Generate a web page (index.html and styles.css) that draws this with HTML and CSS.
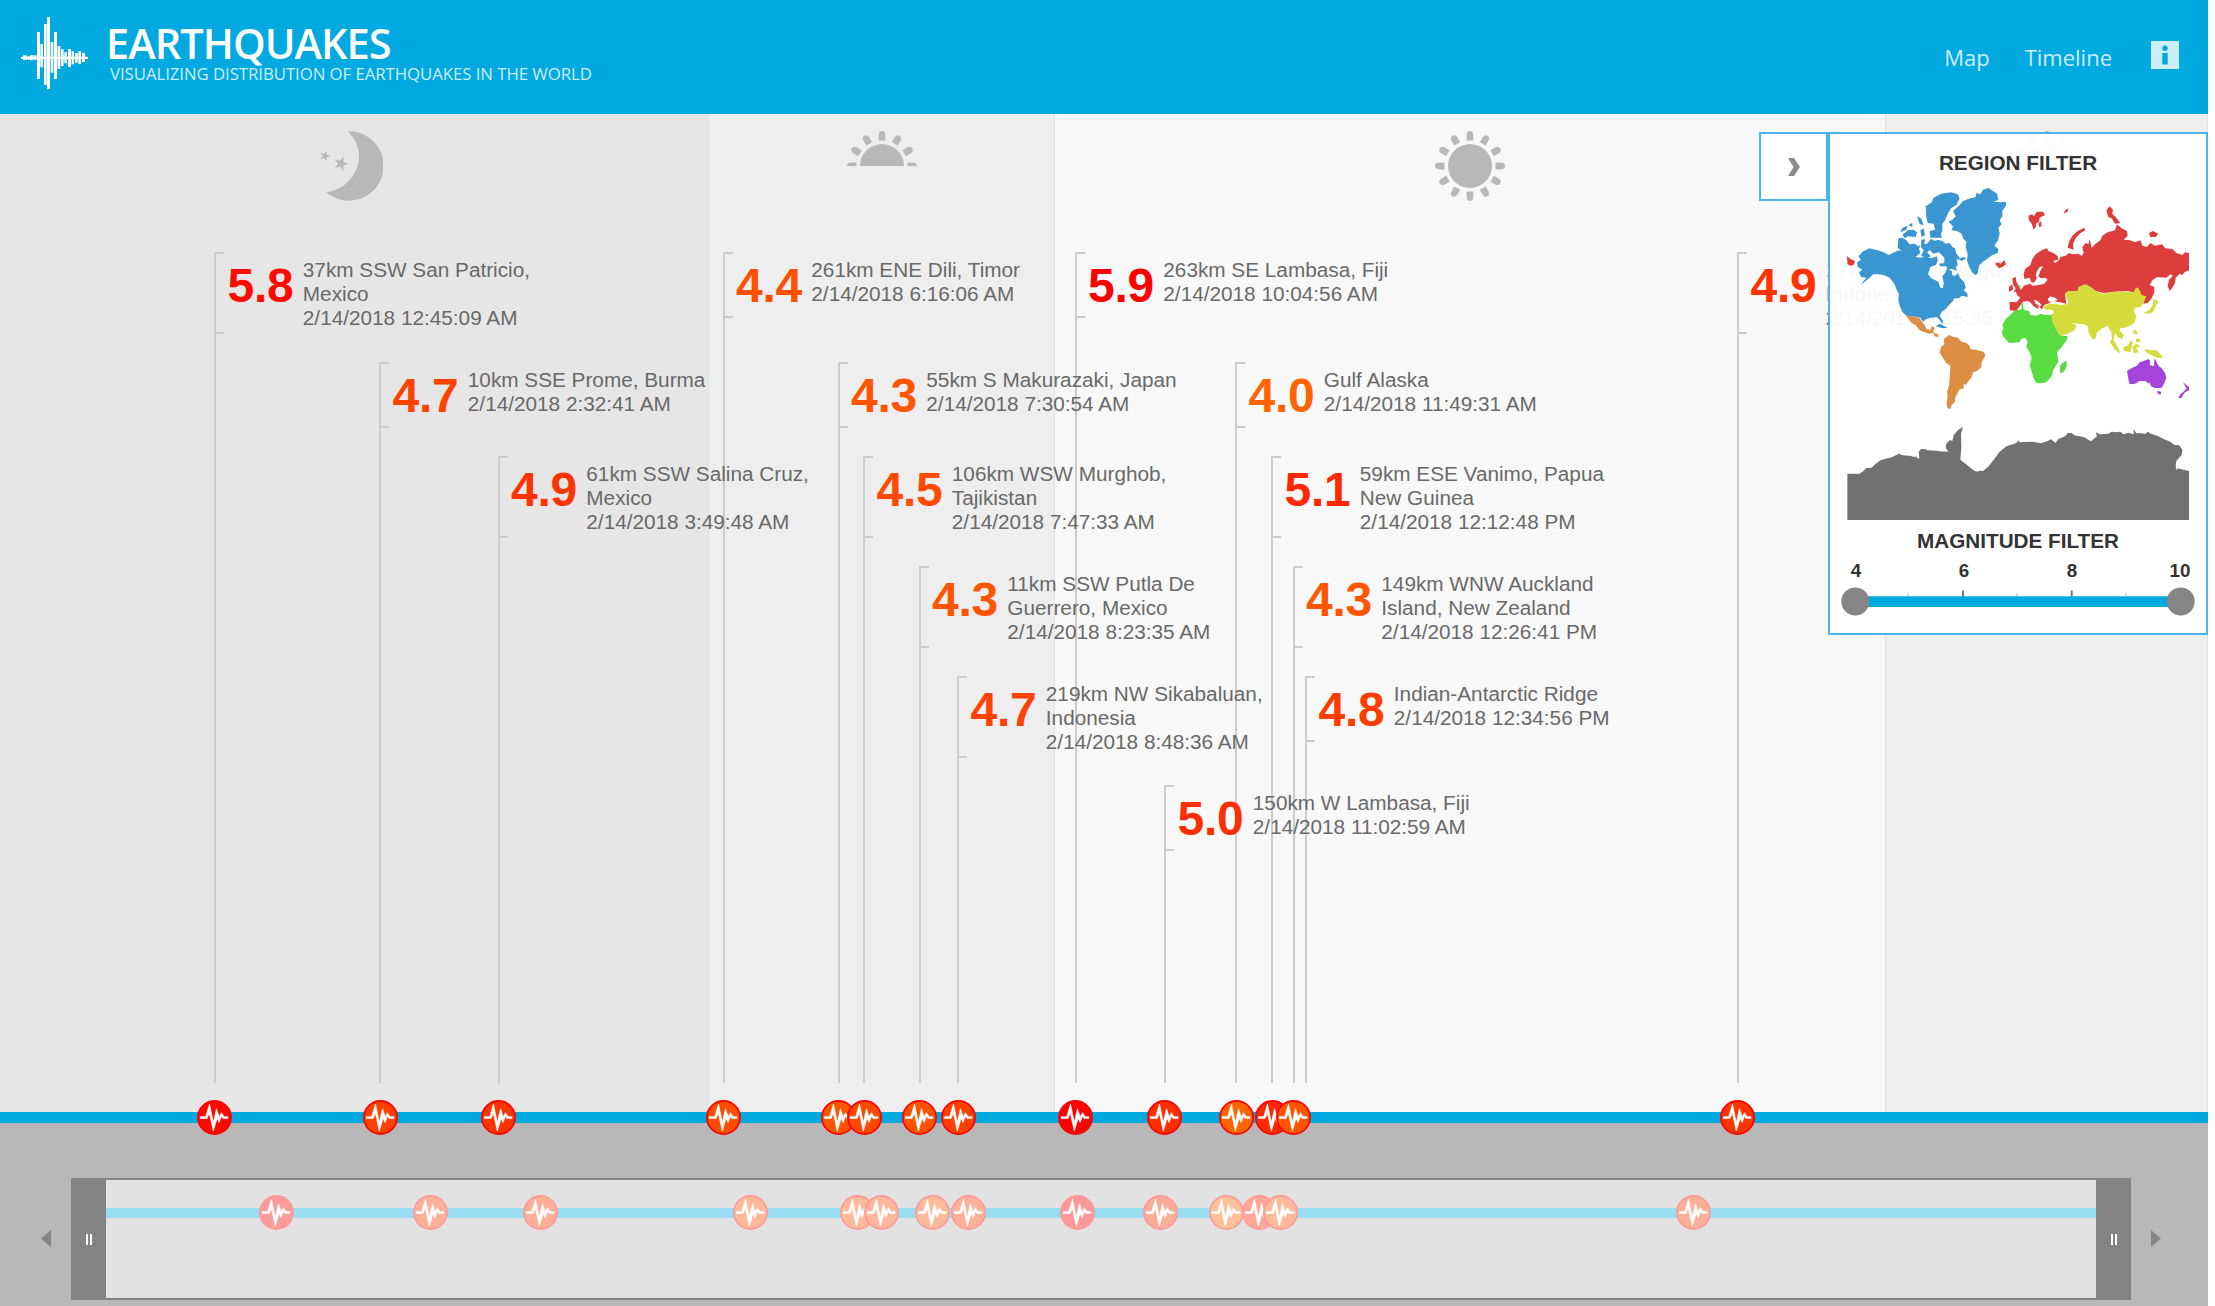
FILE: index.html
```html
<!DOCTYPE html>
<html lang="en">
<head>
<meta charset="utf-8">
<title>Earthquakes</title>
<link rel="stylesheet" href="styles.css">
</head>
<body>
<svg class="defs" width="0" height="0">
  <symbol id="quake" viewBox="-17.5 -17.5 35 35">
    <circle r="16.6" fill="currentColor" stroke="#ff0000" stroke-width="1.7"/>
    <path class="pulse" d="M-14.2,-.8H-8.8L-5,-13.4L-1.2,5L2,-8.8L4.6,-.8L7,-4.8L9.6,-.8H13.4V1H8.6L7,-1.2L4.6,5L2.6,.8L-1.2,13.6L-5.2,-4.6L-7.4,1H-14.2Z"/>
  </symbol>
  <symbol id="quake-soft" viewBox="-17.5 -17.5 35 35">
    <circle r="16.6" fill="currentColor" stroke="#ff9999" stroke-width="1.7"/>
    <path class="pulse" d="M-14.2,-.8H-8.8L-5,-13.4L-1.2,5L2,-8.8L4.6,-.8L7,-4.8L9.6,-.8H13.4V1H8.6L7,-1.2L4.6,5L2.6,.8L-1.2,13.6L-5.2,-4.6L-7.4,1H-14.2Z"/>
  </symbol>
  <symbol id="sun" viewBox="-35 -35 70 70">
    <circle r="22"/>
    <path id="r" d="M-3.4,-25.5V-31Q-3.2,-35 0,-35Q3.2,-35 3.4,-31V-25.5Z"/>
    <use href="#r" transform="rotate(30)"/><use href="#r" transform="rotate(60)"/><use href="#r" transform="rotate(90)"/>
    <use href="#r" transform="rotate(120)"/><use href="#r" transform="rotate(150)"/><use href="#r" transform="rotate(180)"/>
    <use href="#r" transform="rotate(210)"/><use href="#r" transform="rotate(240)"/><use href="#r" transform="rotate(270)"/>
    <use href="#r" transform="rotate(300)"/><use href="#r" transform="rotate(330)"/>
  </symbol>
</svg>
<div class="app">
  <header class="header">
    <svg class="logo" viewBox="33 21 201 217" fill="#fff">
      <path d="M33,140H234V147H33ZM39,136H50V150H39ZM53,138H58V150H53ZM60,135H70V151H60ZM72,136H79V150H72ZM81,66H90V206H81ZM91,102H99V172H91ZM102,42H110V225H102ZM111,21H120V238H111ZM122,96H130V188H122ZM132,66H141V207H132ZM142.500,108H151V177H142.500ZM153,118H161V168H153ZM163,127H171V160H163ZM174,117H183V171H174ZM185,124H192V163H185ZM195,129H203V158H195ZM205,123H213V162H205ZM216,129H225V156H216Z"/>
    </svg>
    <div class="titles">
      <h1>EARTHQUAKES</h1>
      <p>VISUALIZING DISTRIBUTION OF EARTHQUAKES IN THE WORLD</p>
    </div>
    <nav class="nav">
      <a class="nav-map">Map</a>
      <a class="nav-time">Timeline</a>
      <svg class="info" viewBox="0 0 28 28"><path fill="#cceefa" d="M0,0H28V28H0Z"/><circle cx="14" cy="7.300" r="2.700" fill="#00a9e0"/><path fill="#00a9e0" d="M11.300,12H16.700V23.500H11.300Z"/></svg>
    </nav>
  </header>

  <main class="timeline">
    <div class="bands">
      <div class="band night">
        <svg class="moon" viewBox="57 34 194 210"><path d="M143,35A104,104 0 1 1 78,217C130,214 177,165 177,112C177,82 165,55 143,35Z"/><path d="M92,109L80.300,112.900L80.200,125.200L72.900,115.200L61.200,118.900L68.400,109L61.200,99.100L72.900,102.800L80.200,92.800L80.300,105.100Z"/><path d="M146,132L130.300,137.100L130.100,153.900L120.200,140.400L104.400,145.500L114,132L104.400,118.500L120.200,123.600L130.100,110.100L130.300,126.900Z"/></svg>
      </div>
      <div class="band dawn"><svg class="half" viewBox="-35 -35 70 35"><use href="#sun" x="-35" y="-35" width="70" height="70"/></svg></div>
      <div class="band day"><svg class="full"><use href="#sun"/></svg></div>
      <div class="band dusk"><svg class="half" viewBox="-35 -35 70 35"><use href="#sun" x="-35" y="-35" width="70" height="70"/></svg></div>
    </div>

    <div class="axis"></div>

    <div class="event r1" style="left:214px"><div class="label tall"><b style="color:#ff0a00">5.8</b><p>37km SSW San Patricio,<br>Mexico<br>2/14/2018 12:45:09 AM</p></div></div>
    <div class="event r2" style="left:379px"><div class="label"><b style="color:#ff4200">4.7</b><p>10km SSE Prome, Burma<br>2/14/2018 2:32:41 AM</p></div></div>
    <div class="event r3" style="left:497.500px"><div class="label tall"><b style="color:#ff3300">4.9</b><p>61km SSW Salina Cruz,<br>Mexico<br>2/14/2018 3:49:48 AM</p></div></div>
    <div class="event r1" style="left:722.500px"><div class="label"><b style="color:#ff5000">4.4</b><p>261km ENE Dili, Timor<br>2/14/2018 6:16:06 AM</p></div></div>
    <div class="event r2" style="left:837.500px"><div class="label"><b style="color:#ff5500">4.3</b><p>55km S Makurazaki, Japan<br>2/14/2018 7:30:54 AM</p></div></div>
    <div class="event r3" style="left:863px"><div class="label tall"><b style="color:#ff4a00">4.5</b><p>106km WSW Murghob,<br>Tajikistan<br>2/14/2018 7:47:33 AM</p></div></div>
    <div class="event r4" style="left:918.500px"><div class="label tall"><b style="color:#ff5500">4.3</b><p>11km SSW Putla De<br>Guerrero, Mexico<br>2/14/2018 8:23:35 AM</p></div></div>
    <div class="event r5" style="left:957px"><div class="label tall"><b style="color:#ff4200">4.7</b><p>219km NW Sikabaluan,<br>Indonesia<br>2/14/2018 8:48:36 AM</p></div></div>
    <div class="event r1" style="left:1074.500px"><div class="label"><b style="color:#ff0000">5.9</b><p>263km SE Lambasa, Fiji<br>2/14/2018 10:04:56 AM</p></div></div>
    <div class="event r6" style="left:1164px"><div class="label"><b style="color:#ff2e00">5.0</b><p>150km W Lambasa, Fiji<br>2/14/2018 11:02:59 AM</p></div></div>
    <div class="event r2" style="left:1235px"><div class="label"><b style="color:#ff6400">4.0</b><p>Gulf Alaska<br>2/14/2018 11:49:31 AM</p></div></div>
    <div class="event r3" style="left:1271px"><div class="label tall"><b style="color:#ff2800">5.1</b><p>59km ESE Vanimo, Papua<br>New Guinea<br>2/14/2018 12:12:48 PM</p></div></div>
    <div class="event r4" style="left:1292.500px"><div class="label tall"><b style="color:#ff5500">4.3</b><p>149km WNW Auckland<br>Island, New Zealand<br>2/14/2018 12:26:41 PM</p></div></div>
    <div class="event r5" style="left:1305px"><div class="label"><b style="color:#ff3c00">4.8</b><p>Indian-Antarctic Ridge<br>2/14/2018 12:34:56 PM</p></div></div>
    <div class="event r1" style="left:1737px"><div class="label tall"><b style="color:#ff3300">4.9</b><p>17km NNW Pasigung,<br>Indonesia<br>2/14/2018 5:15:35 PM</p></div></div>

    <svg class="marker" style="left:214.500px;color:#ff0800"><use href="#quake"/></svg>
    <svg class="marker" style="left:380px;color:#ff4000"><use href="#quake"/></svg>
    <svg class="marker" style="left:498.500px;color:#ff3300"><use href="#quake"/></svg>
    <svg class="marker" style="left:723.500px;color:#ff4d00"><use href="#quake"/></svg>
    <svg class="marker" style="left:838.500px;color:#ff5500"><use href="#quake"/></svg>
    <svg class="marker" style="left:864.300px;color:#ff4800"><use href="#quake"/></svg>
    <svg class="marker" style="left:919.500px;color:#ff5200"><use href="#quake"/></svg>
    <svg class="marker" style="left:958px;color:#ff4000"><use href="#quake"/></svg>
    <svg class="marker" style="left:1075.500px;color:#ff0000"><use href="#quake"/></svg>
    <svg class="marker" style="left:1164.700px;color:#ff2e00"><use href="#quake"/></svg>
    <svg class="marker" style="left:1236.200px;color:#ff6400"><use href="#quake"/></svg>
    <svg class="marker" style="left:1272px;color:#ff2800"><use href="#quake"/></svg>
    <svg class="marker" style="left:1293.500px;color:#ff5500"><use href="#quake"/></svg>
    <svg class="marker" style="left:1737.700px;color:#ff3300"><use href="#quake"/></svg>
  </main>

  <section class="scroller">
    <svg class="arrow" viewBox="0 0 10 17"><path d="M10,0V17L0,8.500Z"/></svg>
    <div class="range">
      <div class="handle"><i></i><i></i></div>
      <div class="overview">
        <div class="mini-axis"></div>
        <svg class="mini" style="left:170.700px;color:#ff9c99"><use href="#quake-soft"/></svg>
        <svg class="mini" style="left:324.500px;color:#ffb099"><use href="#quake-soft"/></svg>
        <svg class="mini" style="left:434.800px;color:#ffae99"><use href="#quake-soft"/></svg>
        <svg class="mini" style="left:644.100px;color:#ffb899"><use href="#quake-soft"/></svg>
        <svg class="mini" style="left:751px;color:#ffbb99"><use href="#quake-soft"/></svg>
        <svg class="mini" style="left:775px;color:#ffb699"><use href="#quake-soft"/></svg>
        <svg class="mini" style="left:826.300px;color:#ffba99"><use href="#quake-soft"/></svg>
        <svg class="mini" style="left:862.100px;color:#ffb099"><use href="#quake-soft"/></svg>
        <svg class="mini" style="left:971.100px;color:#ff9999"><use href="#quake-soft"/></svg>
        <svg class="mini" style="left:1054px;color:#ffab99"><use href="#quake-soft"/></svg>
        <svg class="mini" style="left:1120.600px;color:#ffc199"><use href="#quake-soft"/></svg>
        <svg class="mini" style="left:1153.800px;color:#ffa899"><use href="#quake-soft"/></svg>
        <svg class="mini" style="left:1174.400px;color:#ffbb99"><use href="#quake-soft"/></svg>
        <svg class="mini" style="left:1587.200px;color:#ffae99"><use href="#quake-soft"/></svg>
      </div>
      <div class="handle"><i></i><i></i></div>
    </div>
    <svg class="arrow" viewBox="0 0 10 17"><path d="M0,0V17L10,8.500Z"/></svg>
  </section>

  <aside class="filter">
    <div class="toggle"><svg viewBox="0 0 12 18"><path d="M0,0H6L12,9L6,18H0L5.500,9Z"/></svg></div>
    <div class="panel">
      <h2>REGION FILTER</h2>
      <svg class="map" viewBox="80 50 1028 1000">
        <g class="na">
          <path d="M110,276L122,268L114,258L126,244L146,234L172,240L190,246L205,254L222,246L236,240L252,244L262,252L278,258L300,262L318,258L332,264L350,258L352,272L346,284L330,290L323,312L333,324L354,334L360,352L368,354L370,338L366,318L376,306L380,292L394,302L396,314L404,318L412,308L420,324L432,336L436,352L430,360L440,368L443,380L424,376L416,384L402,384L398,392L386,404L376,416L364,424L358,436L368,452L366,462L360,452L350,440L334,442L318,446L308,454L300,442L280,438L258,436L246,424L238,406L234,390L236,372L228,356L222,340L208,322L190,314L172,312L158,312L148,322L136,332L122,344L130,332L138,322L122,320L116,306L126,298L112,290Z"/>
          <path d="M234,204L246,202L258,210L268,222L284,220L292,228L300,224L296,236L300,248L290,256L280,262L262,258L244,242L232,232Z"/>
          <path d="M303,208L314,206L312,220L318,222L332,206L344,212L352,208L366,212L376,220L388,218L396,230L404,234L408,250L418,262L414,270L408,264L412,284L406,290L410,302L396,296L384,296L376,288L360,288L356,280L372,278L372,262L356,246L340,250L328,240L320,246L332,258L316,262L302,256L310,240L302,230Z"/>
          <path d="M316,108L334,96L340,82L362,70L392,66L412,72L418,84L408,104L392,114L382,130L374,150L366,160L366,180L362,190L364,202L330,202L328,182L344,178L340,160L322,158L318,140Z"/>
          <path d="M290,138L302,144L310,164L298,162ZM240,186L246,172L262,166L258,178ZM246,194L262,180L280,178L290,186L286,200L262,198L254,204ZM264,164L276,158L276,170ZM300,180L310,174L314,194L304,200Z"/>
          <path d="M384,154L396,148L406,138L398,122L416,106L428,92L450,84L466,80L468,68L480,72L488,58L504,53L518,62L530,70L534,88L520,94L540,96L556,94L558,104L546,122L546,138L538,150L544,162L534,172L538,190L532,212L522,226L534,236L532,248L516,254L500,266L486,276L476,286L472,310L464,314L454,304L446,288L440,270L442,250L436,232L438,214L428,204L424,190L410,182L394,180L398,168Z"/>
          <path d="M414,266L428,260L438,264L424,272ZM346,468L358,460L382,472L366,474Z"/>
        </g>
        <g class="sa">
          <path d="M258,436L280,438L298,444L306,456L314,466L318,476L330,478L334,468L344,472L338,484L346,490L354,492L354,500L342,498L340,488L326,490L308,484L296,478L288,466L274,458L264,446Z"/>
          <path d="M370,506L386,494L398,500L412,502L424,514L438,518L448,526L450,536L472,540L490,544L495,556L484,576L482,592L470,602L458,606L454,620L442,636L438,644L430,640L430,654L416,658L410,672L404,682L404,694L394,704L390,716L382,714L378,700L382,680L380,664L386,646L388,620L390,588L376,576L366,560L358,546L362,530L372,522Z"/>
        </g>
        <g class="eu">
          <path d="M80,257L90,266L104,272L100,284L88,286L81,280ZM524,280L534,276L540,280L552,270L557,282L546,290L536,294ZM624,136L636,132L640,138L650,124L668,124L674,134L658,142L656,156L648,158L646,170L640,178L634,160L626,150ZM654,160L662,152L664,168L656,170ZM729,130L736,118L744,114L742,124ZM742,232L746,214L756,196L772,182L792,172L794,180L778,190L766,204L758,220L760,238ZM858,120L868,108L878,118L876,130L886,140L900,158L884,160L874,144L864,140ZM986,188L998,182L1014,190L1006,200L990,200Z"/>
          <path d="M566,350L576,342L578,358L566,364ZM576,324L586,320L588,334L598,352L600,360L580,366L586,354L578,342Z"/>
          <path d="M568,394L588,396L600,382L590,374L586,362L604,356L610,346L630,340L636,346L656,344L672,340L682,328L674,322L662,324L654,318L660,302L668,288L658,290L650,302L646,316L650,324L640,338L632,334L628,322L612,326L610,312L614,296L630,284L636,266L648,250L666,238L680,234L684,242L700,248L712,258L714,268L698,272L704,278L716,270L720,260L736,256L746,248L758,252L774,250L784,256L790,248L786,230L796,218L804,222L808,206L814,232L824,222L840,210L846,196L862,186L884,180L890,162L904,174L920,182L922,196L910,208L930,210L944,216L960,210L966,226L980,230L990,218L1004,226L1026,222L1034,234L1056,236L1068,248L1086,254L1094,246L1108,248L1108,300L1094,304L1086,314L1078,310L1066,322L1064,338L1056,352L1048,362L1042,346L1046,328L1058,316L1050,312L1038,322L1010,320L996,330L988,344L1002,350L1002,366L994,384L982,398L968,400L972,382L962,374L952,352L940,366L920,362L882,364L850,368L826,362L810,350L790,344L776,350L772,362L744,362L734,370L738,400L718,396L700,392L682,400L672,404L664,418L656,406L652,416L640,408L630,396L622,392L608,394L598,408L588,422L568,420Z"/>
        </g>
        <path class="gap" d="M640,388L652,392L664,404L658,408L646,400ZM682,386L690,378L704,382L712,388L698,394L686,394Z"/>
        <g class="asia">
          <path d="M734,372L744,362L772,362L774,350L796,342L812,350L826,362L848,370L882,364L918,364L940,366L946,352L954,352L964,374L978,378L970,398L960,410L944,412L940,424L948,438L942,458L926,468L910,474L900,472L898,482L910,494L906,506L894,502L884,488L880,510L894,534L900,550L884,538L868,514L874,508L874,488L862,466L846,474L830,486L826,504L818,508L806,490L802,468L790,462L772,460L752,458L768,464L764,478L748,488L722,498L708,480L698,458L694,432L702,426L694,418L674,418L670,410L684,402L700,400L722,404L738,402L744,396Z"/>
          <path d="M970,428L986,420L996,406L1000,386L1014,392L1006,408L1000,422L988,430ZM938,478L948,480L952,492L940,492ZM946,506L958,504L960,514L948,516ZM908,530L922,526L930,512L938,514L934,530L930,546L912,542ZM936,530L948,520L960,528L946,534L956,546L940,548ZM972,536L990,540L1008,540L1024,556L1030,562L1010,562L996,556L976,544Z"/>
        </g>
        <g class="africa">
          <path d="M603,398L608,398L610,418L626,422L630,434L648,436L660,430L676,434L694,434L698,458L710,482L722,498L742,496L740,508L724,530L710,546L714,574L704,590L698,600L696,614L684,630L672,638L648,638L640,624L634,604L628,584L634,562L628,546L618,530L622,514L614,502L602,506L598,516L566,518L548,498L544,484L550,474L546,464L556,446L572,432L582,422L604,416Z"/>
          <path d="M720,584L732,574L740,572L738,590L730,606L720,608L718,596ZM595,346L600,344L600,358Z"/>
        </g>
        <path class="oceania" d="M920,602L936,592L950,586L958,576L970,572L984,566L990,572L988,584L1000,588L1003,564L1010,578L1016,588L1024,594L1034,608L1038,622L1032,638L1024,652L1006,654L992,648L988,636L984,640L976,632L958,632L944,640L928,642L924,626ZM1010,662L1022,664L1022,672L1014,672ZM1088,636L1106,650L1106,660L1094,666L1082,684L1074,682L1080,672L1092,662L1098,654Z"/>
        <path class="antarctic" d="M81,910H118L128,903L138,893L154,892L166,880L180,870L196,865L214,861L236,850L246,855L268,856L282,860L288,858L292,865L297,863L295,844L302,836L316,837L320,840L348,841L356,843L384,844L376,832L378,820L388,809L396,812L400,795L412,780L428,769L422,790L423,830L420,868L440,884L460,900L470,904L478,901L488,902L505,888L520,868L538,844L558,828L588,818L594,810L598,816L636,814L662,819L680,813L692,807L706,818L714,806L736,797L742,788L754,788L762,795L790,800L812,813L830,798L826,786L838,792L864,790L874,784L892,786L900,784L910,792L924,787L940,792L940,777L948,789L960,788L974,791L983,784L988,789L1012,797L1030,806L1050,814L1062,824L1076,824L1086,838L1084,854L1068,872L1066,888L1069,900L1072,894L1090,898L1108,903V1050H81Z"/>
      </svg>
      <h2>MAGNITUDE FILTER</h2>
      <div class="scale"><span>4</span><span>6</span><span>8</span><span>10</span></div>
      <svg class="slider" viewBox="0 0 356 30">
        <path d="M68,6V10M177,6V10M286,6V10" stroke="#9db4bf" stroke-width="1"/>
        <path d="M123,3.500V10M231.700,3.500V10" stroke="#5f8391" stroke-width="2"/>
        <path d="M15,9.300H340V20H15Z" fill="#00a9e0"/>
        <circle cx="15.300" cy="14.500" r="14" fill="#858585"/><circle cx="340.700" cy="14.500" r="14" fill="#858585"/>
      </svg>
    </div>
  </aside>
</div>
</body>
</html>
```
FILE: styles.css
```css
*, ::before { box-sizing: border-box; }
body { margin: 0; background: #fdfdfe; font-family: "Liberation Sans", Arial, sans-serif; overflow: hidden; }
h1, h2, p { margin: 0; }
svg { display: block; }
.defs { position: absolute; }
.app { position: relative; width: 2208px; height: 1306px; display: flex; flex-direction: column; }

.header { height: 114px; flex: none; background: #00a9e0; display: flex; align-items: flex-start; padding: 17px 29px 0 21px; font-family: "Open Sans", "Noto Sans", sans-serif; }
.logo { width: 67px; height: 72.3px; }
.titles { margin-left: 18px; color: #cceefa; white-space: nowrap; }
.titles h1 { color: #fff; font-size: 41.5px; line-height: 50px; font-weight: 600; letter-spacing: -0.95px; padding-top: 1px; }
.titles p { font-size: 16.8px; line-height: 20px; margin: -4px 0 0 4px; letter-spacing: -0.06px; }
.nav { margin-left: auto; display: flex; color: #cceefa; font-size: 22px; line-height: 30px; padding-top: 24px; }
.nav a { padding-top: 1px; }
.nav-map { margin-right: 35px; }
.nav-time { margin-right: 39px; }
.info { width: 28px; height: 28px; }

.timeline { position: relative; height: 1009px; flex: none; }
.bands { display: flex; height: 998px; }
.band { display: flex; justify-content: center; align-items: flex-start; padding-top: 17px; border-right: 1px solid #dde3e7; fill: #b8b8b8; }
.night { width: 709px; background: #e6e6e6; padding-right: 6px; }
.dawn { width: 346px; background: #eee; }
.day { width: 831px; background: #f8f8f8; }
.dusk { width: 322px; background: #eee; }
.moon { width: 64.7px; height: 70px; }
.half { width: 70px; height: 35px; }
.full { width: 70px; height: 70px; }
.axis { height: 11px; background: #00a9e0; }

.event { position: absolute; bottom: 40px; border-left: 2px solid #ccc; }
.r1 { top: 138px; }
.r2 { top: 248px; }
.r3 { top: 342px; }
.r4 { top: 452px; }
.r5 { top: 562px; }
.r6 { top: 671px; }
.label { display: flex; position: relative; height: 66px; padding: 6px 0 0 11.5px; white-space: nowrap; }
.label.tall { height: 82px; }
.label::before { content: ""; position: absolute; left: 0; top: 0; width: 8px; height: 100%; border: solid #ccc; border-width: 2px 0; }
.label b, .label p { position: relative; z-index: 1; }
.label b { font-size: 48px; line-height: 55px; letter-spacing: -0.3px; margin-right: 9.5px; }
.label p { font-size: 20.75px; line-height: 24px; color: #696969; }
.r2 .label p { line-height: 23.5px; }
.marker { position: absolute; top: 986px; width: 35px; height: 35px; margin-left: -17.5px; }
.pulse { fill: #fff; stroke: #fff; stroke-width: .7; }

.scroller { flex: 1; background: #b8b8b8; display: flex; align-items: flex-start; padding: 55px 0 0 41px; }
.arrow { width: 10px; height: 17px; fill: #858585; margin-top: 52px; }
.range { display: flex; width: 2060px; height: 122px; margin: 0 20px; background: #838383; padding: 2px 0; }
.handle { width: 35px; display: flex; gap: 2px; justify-content: center; align-items: center; }
.handle i { width: 2px; height: 11px; background: #fff; }
.overview { position: relative; flex: 1; background: #e2e2e2; padding-top: 27.5px; }
.mini-axis { height: 10.5px; background: #98ddf2; }
.mini { position: absolute; top: 15px; width: 35px; height: 35px; margin-left: -17.5px; }

.filter { position: absolute; z-index: 2; right: 0; top: 132px; display: flex; align-items: flex-start; }
.toggle { width: 69px; height: 69px; border: 2px solid #48b6e9; background: #fff; display: flex; align-items: center; justify-content: center; }
.toggle svg { width: 12px; height: 18px; fill: #8c8c8c; }
.panel { width: 380px; height: 502.500px; border: 2px solid #48b6e9; background: rgba(255,255,255,.95); padding: 17px 0 0; display: flex; flex-direction: column; align-items: center; }
.panel h2 { font-size: 20.7px; line-height: 24px; color: #333; font-weight: bold; }
.map { width: 342.7px; height: 333.3px; margin: 12px 0 9px; flex: none; }
.na { fill: #3a96d0; }
.sa { fill: #dc8f44; }
.eu { fill: #dd3d3d; }
.asia { fill: #d6db3c; }
.africa { fill: #58dc40; }
.oceania { fill: #a544d9; }
.antarctic { fill: #717171; }
.gap { fill: #fff; }
.scale { display: flex; justify-content: space-between; width: 364px; font-size: 18.8px; line-height: 22px; font-weight: bold; color: #333; margin-top: 7px; }
.scale span { width: 40px; text-align: center; }
.slider { width: 356px; height: 30px; flex: none; margin-top: 5px; }
```
